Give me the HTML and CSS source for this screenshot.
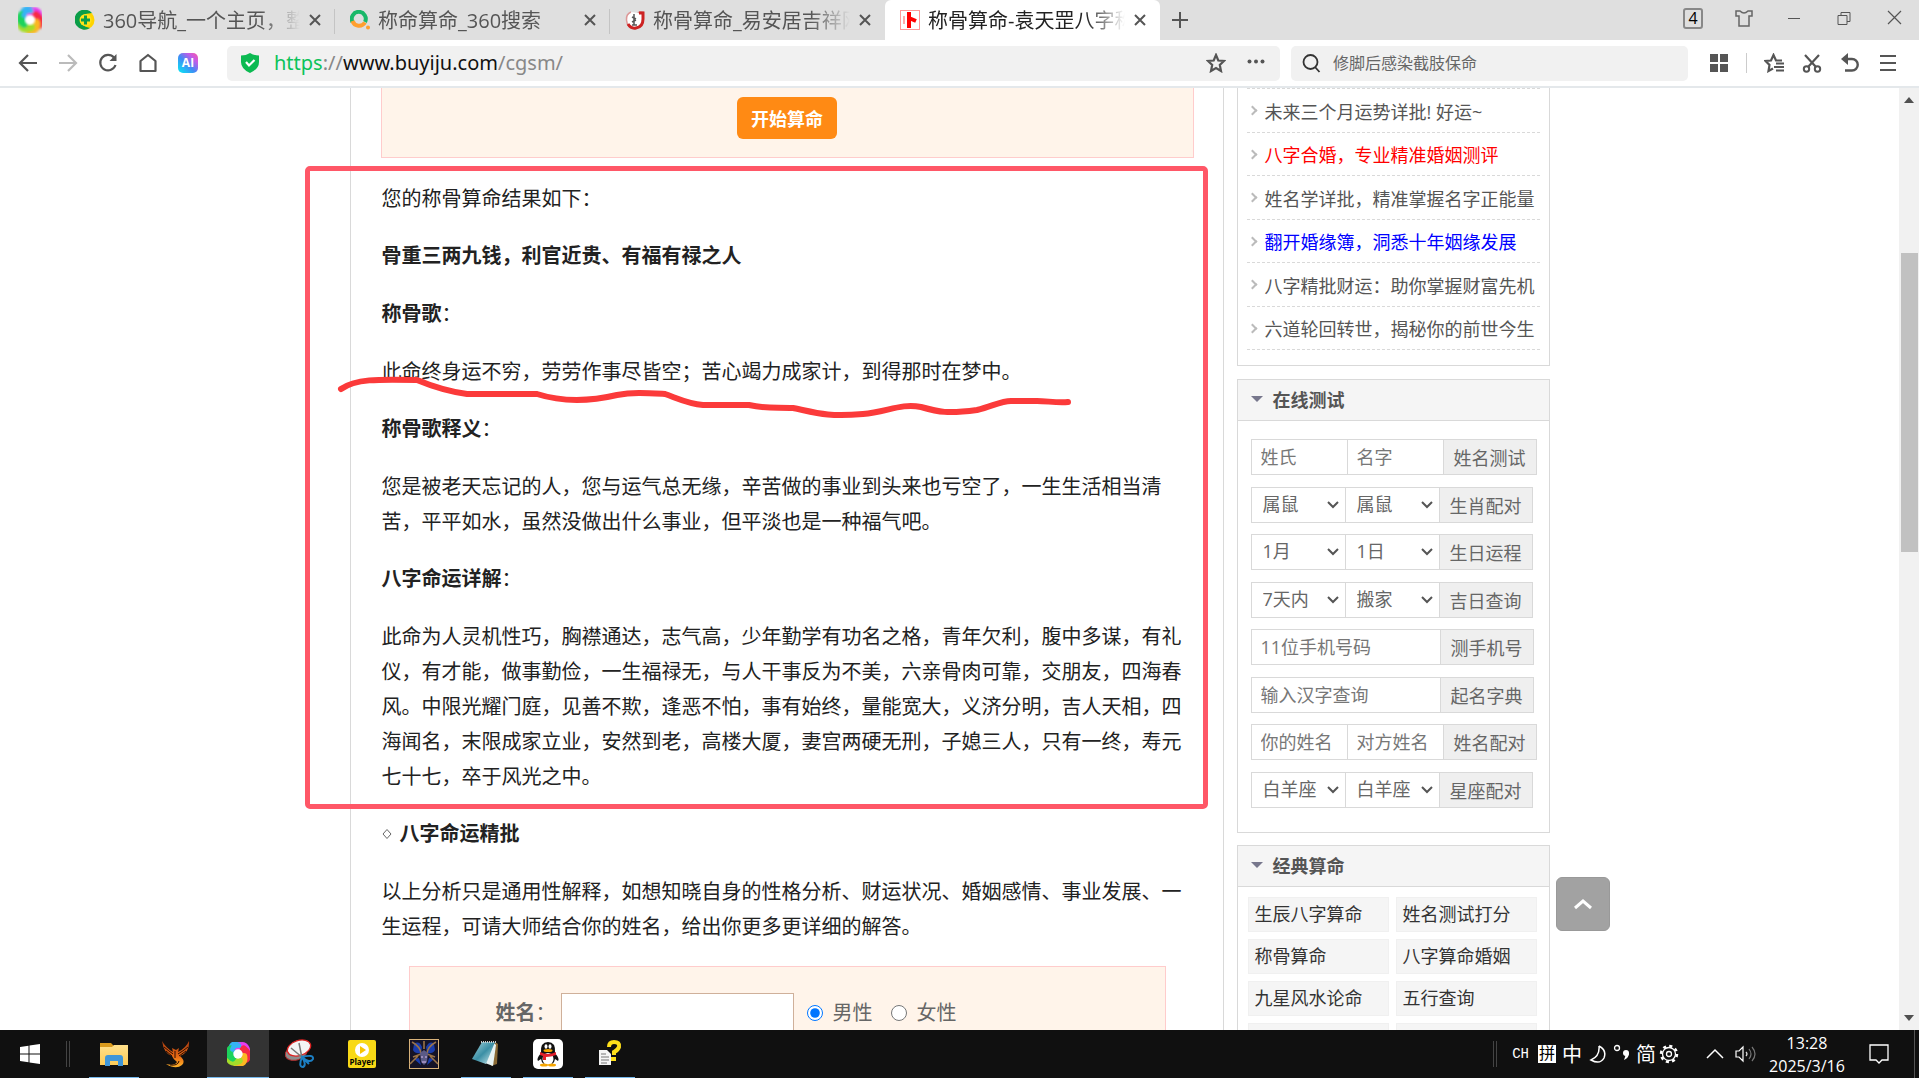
FILE: index.html
```html
<!DOCTYPE html>
<html lang="zh-CN">

<head>
  <meta charset="utf-8">
  <title>称骨算命-袁天罡八字称骨算命</title>
  <link rel="stylesheet" href="styles.css">
</head>

<body>
  <svg class="sprite" aria-hidden="true">
    <defs>
      <filter id="soft" x="-10%" y="-10%" width="120%" height="120%"><feGaussianBlur stdDeviation="0.8" /></filter>
      <symbol id="logo" viewBox="0 0 32 32">
        <g fill="none" stroke-width="8" stroke-linecap="round" filter="url(#soft)">
          <path d="M10 12 Q9 5 16 6" stroke="#35b4f5" />
          <path d="M15 9 Q23 4 25 12" stroke="#e63cf2" />
          <path d="M22 11 Q28 16 25 21" stroke="#f62a45" />
          <path d="M22 19 Q23 27 15 26" stroke="#fbb724" />
          <path d="M17 23 Q8 27 7 20" stroke="#a4dd2c" />
          <path d="M10 20 Q4 16 8 11" stroke="#1fd35c" />
          <path d="M10 11 Q12 6 17 7" stroke="#35b4f5" stroke-width="5" />
        </g>
        <circle cx="16" cy="16" r="5" fill="#fff" filter="url(#soft)" />
      </symbol>
      <symbol id="close" viewBox="0 0 12 12">
        <path d="M1 1 L11 11 M11 1 L1 11" fill="none" stroke="#555" stroke-width="2" />
      </symbol>
      <linearGradient id="ai-bg" x1="0" y1="1" x2="1" y2="0">
        <stop offset="0.1" stop-color="#12d8f4" />
        <stop offset="0.45" stop-color="#3f8cf5" />
        <stop offset="0.75" stop-color="#c55be8" />
        <stop offset="1" stop-color="#f95aa0" />
      </linearGradient>
      <linearGradient id="folder-bg" x1="0" y1="0" x2="0" y2="1">
        <stop offset="0" stop-color="#ffe08a" />
        <stop offset="1" stop-color="#fccb57" />
      </linearGradient>
      <linearGradient id="note-bg" x1="0" y1="0" x2="1" y2="1">
        <stop offset="0" stop-color="#a9d6de" />
        <stop offset="0.5" stop-color="#3b8fa5" />
        <stop offset="1" stop-color="#d7f0f2" />
      </linearGradient>
      <linearGradient id="fire" x1="0" y1="0" x2="0" y2="1">
        <stop offset="0" stop-color="#a93b10" />
        <stop offset="0.6" stop-color="#e86a13" />
        <stop offset="1" stop-color="#ffb52a" />
      </linearGradient>
    </defs>
  </svg>

  <header class="browser">
    <div class="tab-bar">
      <svg class="browser-logo" viewBox="0 0 32 32"><use href="#logo" /></svg>
      <div class="tabs">
        <div class="tab">
          <svg class="favicon" viewBox="0 0 20 20">
            <circle cx="10" cy="10" r="9.5" fill="#ffd400" />
            <path d="M17 3 A10 10 0 1 0 15 18 Q5 16 5 10 T17 3" fill="#0a9d48" />
            <circle cx="10.500" cy="10" r="6" fill="#ffe21a" />
            <path d="M10.500 5.500 V14.500 M6 10 H15" stroke="#0a9d48" stroke-width="3" />
          </svg>
          <span class="tab-title">360导航_一个主页，整</span>
          <button class="tab-close" aria-label="关闭"><svg viewBox="0 0 12 12"><use href="#close" /></svg></button>
        </div>
        <div class="tab">
          <svg class="favicon" viewBox="0 0 20 20">
            <path d="M2.500 12 A7 7 0 1 1 15 12" fill="none" stroke="#19b869" stroke-width="4" />
            <path d="M2.500 11 A7 7 0 0 0 15 12.500" fill="none" stroke="#ff9f2e" stroke-width="4" />
            <circle cx="18" cy="17.500" r="2" fill="#ff9f2e" />
          </svg>
          <span class="tab-title">称命算命_360搜索</span>
          <button class="tab-close" aria-label="关闭"><svg viewBox="0 0 12 12"><use href="#close" /></svg></button>
        </div>
        <div class="tab">
          <svg class="favicon" viewBox="0 0 20 20">
            <path d="M6 2 Q1 4 1.500 10 Q2 18 10 18 Q18 18 18 9 V2 Q14 1 13 3" fill="#fff" stroke="#d99" stroke-width="1.500" />
            <path d="M3 14 Q6 19 11 18 Q18 17 18 9 V3 H14" fill="none" stroke="#c22" stroke-width="3" />
            <path d="M9 4 V15 M7 7 L11 9 M7 12 L11 10 M7 15 H12" stroke="#555" stroke-width="1.500" />
          </svg>
          <span class="tab-title">称骨算命_易安居吉祥网</span>
          <button class="tab-close" aria-label="关闭"><svg viewBox="0 0 12 12"><use href="#close" /></svg></button>
        </div>
        <div class="tab active">
          <svg class="favicon" viewBox="0 0 20 20">
            <rect x="0.500" y="0.500" width="19" height="19" fill="#fff" stroke="#f99" />
            <path d="M9 2 V18 M9 8 L16 11" stroke="#f00" stroke-width="4" />
            <path d="M4 6 V14" stroke="#faa" stroke-width="2" />
          </svg>
          <span class="tab-title">称骨算命-袁天罡八字称</span>
          <button class="tab-close" aria-label="关闭"><svg viewBox="0 0 12 12"><use href="#close" /></svg></button>
        </div>
      </div>
      <button class="new-tab" aria-label="新标签页"><svg viewBox="0 0 16 16"><path d="M8 0 V16 M0 8 H16" stroke="#555" stroke-width="2" /></svg></button>
      <div class="window-buttons">
        <button class="tab-count">4</button>
        <button aria-label="皮肤"><svg viewBox="0 0 20 20"><path d="M2 3 H6 Q10 7 14 3 H18 V8 H15 V18 H5 V8 H2 Z" fill="none" stroke="#666" stroke-width="1.500" /></svg></button>
        <button aria-label="最小化"><svg viewBox="0 0 20 20"><path d="M4 10.500 H16" stroke="#555" /></svg></button>
        <button aria-label="还原"><svg viewBox="0 0 20 20"><path d="M4 7.500 H13 V16.500 H4 Z M7 7.500 V4.500 H16 V13.500 H13" fill="none" stroke="#555" /></svg></button>
        <button aria-label="关闭"><svg viewBox="0 0 20 20"><path d="M4 3 L17 16 M17 3 L4 16" stroke="#555" stroke-width="1.200" /></svg></button>
      </div>
    </div>

    <div class="toolbar">
      <div class="nav-buttons">
        <button aria-label="后退"><svg viewBox="0 0 20 20"><path d="M19 10 H2 M10 2 L2 10 L10 18" fill="none" stroke="#555" stroke-width="2.200" /></svg></button>
        <button aria-label="前进"><svg viewBox="0 0 20 20"><path d="M1 10 H18 M10 2 L18 10 L10 18" fill="none" stroke="#bbb" stroke-width="2.200" /></svg></button>
        <button aria-label="刷新"><svg viewBox="0 0 20 20"><path d="M16 4.500 A7.800 7.800 0 1 0 17.500 12" fill="none" stroke="#555" stroke-width="2.200" /><path d="M18.500 1 V8 H11.500 Z" fill="#555" /></svg></button>
        <button aria-label="主页"><svg viewBox="0 0 20 20"><path d="M2.500 8 L10 2 L17.500 8 V18 H2.500 Z" fill="none" stroke="#555" stroke-width="2.200" stroke-linejoin="round" /></svg></button>
        <button aria-label="AI"><svg viewBox="0 0 20 20"><rect width="20" height="20" rx="5" fill="url(#ai-bg)" /><text x="10" y="14" text-anchor="middle" class="ai-text">AI</text></svg></button>
      </div>
      <div class="address">
        <svg class="shield" viewBox="0 0 20 20"><path d="M10 0 Q14 2.500 19 2.500 V9 Q19 16 10 20 Q1 16 1 9 V2.500 Q6 2.500 10 0" fill="#0cba52" /><path d="M6 9 L9 12.500 L14.500 7" fill="none" stroke="#fff" stroke-width="2.200" /></svg>
        <span class="url"><span class="scheme">https</span>://<span class="host">www.buyiju.com</span>/cgsm/</span>
        <button aria-label="收藏"><svg viewBox="0 0 20 20"><path d="M10 2 L12.300 7.500 L18 8 L13.800 12 L15 18 L10 15 L5 18 L6.200 12 L2 8 L7.700 7.500 Z" fill="none" stroke="#555" stroke-width="2.200" /></svg></button>
        <button aria-label="更多"><svg viewBox="0 0 20 20"><g fill="#555"><circle cx="3.500" cy="8.500" r="2" /><circle cx="10" cy="8.500" r="2" /><circle cx="16.500" cy="8.500" r="2" /></g></svg></button>
      </div>
      <div class="search">
        <svg viewBox="0 0 20 20"><circle cx="9.500" cy="9" r="7" fill="none" stroke="#333" stroke-width="1.800" /><path d="M14 14 L18.500 19" stroke="#333" stroke-width="1.800" /></svg>
        <input type="text" aria-label="搜索" placeholder="修脚后感染截肢保命">
      </div>
      <div class="tools">
        <button aria-label="应用"><svg viewBox="0 0 20 20"><path d="M1 1 H9 V9 H1 Z M11 1 H19 V9 H11 Z M1 11 H9 V19 H1 Z M11 11 H19 V19 H11 Z" fill="#555" /></svg></button>
        <span class="divider"></span>
        <button aria-label="收藏夹"><svg viewBox="0 0 20 20"><path d="M18 7.500 H12 L9.500 2 L7 7.500 L1.500 8 L5.500 12 L4.500 18 L9 15.500" fill="none" stroke="#555" stroke-width="2.200" /><path d="M12 10.500 H20 M10 14 H20 M12 17.500 H20" stroke="#555" stroke-width="2" /></svg></button>
        <button aria-label="截图"><svg viewBox="0 0 20 20"><path d="M3 2 L14 14 M17 2 L6 14" fill="none" stroke="#555" stroke-width="2.200" /><circle cx="4.500" cy="16" r="2.700" fill="none" stroke="#555" stroke-width="2" /><circle cx="15.500" cy="16" r="2.700" fill="none" stroke="#555" stroke-width="2" /></svg></button>
        <button aria-label="恢复"><svg viewBox="0 0 20 20"><path d="M4 6 H12 A5.500 5.500 0 0 1 12 17.500 H5" fill="none" stroke="#555" stroke-width="2.400" /><path d="M8 0 V12 L1 6 Z" fill="#555" /></svg></button>
        <button aria-label="菜单"><svg viewBox="0 0 20 20"><path d="M2 3 H18 M2 10 H18 M2 17 H18" stroke="#555" stroke-width="2.200" /></svg></button>
      </div>
    </div>
  </header>

  <div class="viewport">
    <div class="page">
      <div class="container">
        <main class="article">
          <form class="start-form">
            <button type="button" class="start-btn">开始算命</button>
          </form>

          <div class="result">
            <p>您的称骨算命结果如下：</p>
            <p class="title"><strong>骨重三两九钱，利官近贵、有福有禄之人</strong></p>
            <p class="title"><strong>称骨歌</strong>：</p>
            <p>此命终身运不穷，劳劳作事尽皆空；苦心竭力成家计，到得那时在梦中。</p>
            <p class="title"><strong>称骨歌释义</strong>：</p>
            <p>您是被老天忘记的人，您与运气总无缘，辛苦做的事业到头来也亏空了，一生生活相当清苦，平平如水，虽然没做出什么事业，但平淡也是一种福气吧。</p>
            <p class="title"><strong>八字命运详解</strong>：</p>
            <p>此命为人灵机性巧，胸襟通达，志气高，少年勤学有功名之格，青年欠利，腹中多谋，有礼仪，有才能，做事勤俭，一生福禄无，与人干事反为不美，六亲骨肉可靠，交朋友，四海春风。中限光耀门庭，见善不欺，逢恶不怕，事有始终，量能宽大，义济分明，吉人天相，四海闻名，末限成家立业，安然到老，高楼大厦，妻宫两硬无刑，子媳三人，只有一终，寿元七十七，卒于风光之中。</p>
            <p class="title detail"><svg viewBox="0 0 10 12"><path d="M5 1.500 L9 6 L5 10.500 L1 6 Z" fill="none" stroke="#666" /></svg><strong>八字命运精批</strong></p>
            <p>以上分析只是通用性解释，如想知晓自身的性格分析、财运状况、婚姻感情、事业发展、一生运程，可请大师结合你的姓名，给出你更多更详细的解答。</p>
          </div>

          <form class="name-form">
            <label for="full-name"><strong>姓名</strong>：</label>
            <input type="text" id="full-name">
            <label class="sex"><input type="radio" name="sex" checked>男性</label>
            <label class="sex"><input type="radio" name="sex">女性</label>
          </form>
        </main>

        <aside class="sidebar">
          <section class="panel hot">
            <ul>
              <li><a href="#">未来三个月运势详批! 好运~</a></li>
              <li><a href="#" class="red">八字合婚，专业精准婚姻测评</a></li>
              <li><a href="#">姓名学详批，精准掌握名字正能量</a></li>
              <li><a href="#" class="blue">翻开婚缘簿，洞悉十年姻缘发展</a></li>
              <li><a href="#">八字精批财运：助你掌握财富先机</a></li>
              <li><a href="#">六道轮回转世，揭秘你的前世今生</a></li>
            </ul>
          </section>

          <section class="panel">
            <h2>在线测试</h2>
            <div class="tests">
              <form class="two-inputs"><input type="text" aria-label="姓氏" placeholder="姓氏"><input type="text" aria-label="名字" placeholder="名字"><button type="button">姓名测试</button></form>
              <form class="two-selects"><select aria-label="生肖"><option>属鼠</option></select><select aria-label="对方生肖"><option>属鼠</option></select><button type="button">生肖配对</button></form>
              <form class="two-selects"><select aria-label="月"><option>1月</option></select><select aria-label="日"><option>1日</option></select><button type="button">生日运程</button></form>
              <form class="two-selects"><select aria-label="时间"><option>7天内</option></select><select aria-label="事项"><option>搬家</option></select><button type="button">吉日查询</button></form>
              <form class="one-input"><input type="text" aria-label="手机号码" placeholder="11位手机号码"><button type="button">测手机号</button></form>
              <form class="one-input"><input type="text" aria-label="汉字" placeholder="输入汉字查询"><button type="button">起名字典</button></form>
              <form class="two-inputs"><input type="text" aria-label="你的姓名" placeholder="你的姓名"><input type="text" aria-label="对方姓名" placeholder="对方姓名"><button type="button">姓名配对</button></form>
              <form class="two-selects"><select aria-label="星座"><option>白羊座</option></select><select aria-label="对方星座"><option>白羊座</option></select><button type="button">星座配对</button></form>
            </div>
          </section>

          <section class="panel">
            <h2>经典算命</h2>
            <div class="classics">
              <a href="#">生辰八字算命</a>
              <a href="#">姓名测试打分</a>
              <a href="#">称骨算命</a>
              <a href="#">八字算命婚姻</a>
              <a href="#">九星风水论命</a>
              <a href="#">五行查询</a>
              <a href="#"></a>
              <a href="#"></a>
            </div>
          </section>
        </aside>

        <!-- marker drawn over the result -->
        <div class="mark-box"></div>
        <svg class="mark-line" viewBox="0 0 740 40">
          <path d="M4 14 C18 4 40 4 80 5 C92 10 108 16 130 19 H200 C222 26 250 27 280 20 C296 17 310 18 328 19 C342 24 352 29 366 30 H412 C430 34 440 32 456 33 C480 38 490 42 526 39 C550 37 564 28 584 32 C602 37 610 39 640 35 C656 31 664 26 674 26 H700 C710 26 720 28 731 27" />
        </svg>
        <button class="back-top" aria-label="返回顶部"><svg viewBox="0 0 20 12"><path d="M2 10 L10 3 L18 10" /></svg></button>
      </div>
    </div>
    <div class="scrollbar">
      <svg viewBox="0 0 10 6"><path d="M0 6 L5 0 L10 6 Z" /></svg>
      <div class="thumb"></div>
      <svg viewBox="0 0 10 6"><path d="M0 0 L5 6 L10 0 Z" /></svg>
    </div>
  </div>

  <footer class="taskbar">
    <button class="start" aria-label="开始"><svg viewBox="0 0 20 20"><path d="M0 3 L8.500 1.700 V9.500 H0 Z M9.500 1.500 L20 0 V9.500 H9.500 Z M0 10.500 H8.500 V18.300 L0 17 Z M9.500 10.500 H20 V20 L9.500 18.500 Z" fill="#fff" /></svg></button>
    <span class="grip"></span>
    <div class="apps">
      <button class="running" aria-label="文件资源管理器"><svg viewBox="0 0 30 30">
        <path d="M1 4 H12 L15 7 H28 V10 H1 Z" fill="#d99a1c" />
        <path d="M1 8 H13 L15 6 H29 V26 H1 Z" fill="url(#folder-bg)" />
        <path d="M6 27 V19 Q6 16 9 16 H21 Q24 16 24 19 V27 H19 V22 H11 V27 Z" fill="#3f96d8" />
      </svg></button>
      <button aria-label="凤凰"><svg viewBox="0 0 30 30">
        <path d="M1 2 Q5 9 12 13 L11 9 L15 11 L18 9 L17 13 Q25 9 28 2 Q29 13 19 17 Q25 22 21 26 Q15 31 5 25 Q14 27 16 23 Q12 20 11 17 Q3 15 1 2" fill="url(#fire)" />
        <path d="M3 8 Q8 12 12 15 M5 12 L11 17 M27 8 Q22 12 17 15 M25 12 L18 17 M9 26 Q17 27 18 22 M14 12 V19" fill="none" stroke="#2a0d04" />
      </svg></button>
      <button class="running active" aria-label="浏览器"><svg viewBox="0 0 32 32"><use href="#logo" /></svg></button>
      <button aria-label="截图工具"><svg viewBox="0 0 30 30">
        <ellipse cx="11" cy="14" rx="11" ry="7" transform="rotate(-15 11 14)" fill="#8d8d8d" stroke="#b33" />
        <ellipse cx="14" cy="9" rx="12" ry="7.500" transform="rotate(-18 14 9)" fill="#f4f4f4" stroke="#d22" stroke-width="1.300" />
        <path d="M14 4 L17 19 M6 9 L18 19" stroke="#777" stroke-width="1.500" />
        <path d="M17 18 Q29 15 28 20 Q25 25 17 18 Q13 28 18 28 Q22 26 17 18 L24 25" fill="none" stroke="#1c7fc4" stroke-width="2" />
      </svg></button>
      <button aria-label="Player"><svg viewBox="0 0 30 30">
        <rect x="1" y="1" width="28" height="28" rx="2" fill="#f8d916" />
        <circle cx="15" cy="11" r="7" fill="#fff" />
        <path d="M13 7 L19 11 L13 15 Z" fill="#f8c400" />
        <text x="15" y="26" text-anchor="middle" class="player-text">Player</text>
      </svg></button>
      <button aria-label="游戏"><svg viewBox="0 0 30 30">
        <rect width="30" height="30" fill="#d8b27a" />
        <rect x="1" y="1" width="28" height="28" fill="#151327" />
        <path d="M5 5 Q10 1 13 8 L12 14 Q6 15 4 11 M17 8 Q21 1 25 5 L26 11 Q24 15 18 14 M5 20 L10 19 L12 26 M25 20 L20 19 L18 26" fill="#1a3cab" />
        <path d="M3 3 Q12 8 12 15 L4 18 M27 3 Q18 8 18 15 L26 18 M1 25 L9 17 M29 25 L21 17 M15 2 V10" fill="none" stroke="#9a7348" stroke-width="1.600" />
        <path d="M11 14 L15 11 L19 14 L18 23 L15 26 L12 23 Z" fill="#5b5a86" />
        <path d="M12 18 H14 M16 18 H18 M13 23 H17" stroke="#dbe" />
      </svg></button>
      <button class="running" aria-label="记事本"><svg viewBox="0 0 30 30">
        <path d="M24 3 L27 5 L26 25 L20 27 Z" fill="#8a6a35" />
        <path d="M23 4 L25 6 L22 27 L14 24 Z" fill="#e8f3f3" />
        <path d="M11 3 L24 3 L15 25 L1 20 Z" fill="url(#note-bg)" />
        <path d="M10 3 H25" stroke="#ccc" stroke-width="2" stroke-dasharray="1 1" />
      </svg></button>
      <button class="running" aria-label="QQ"><svg viewBox="0 0 30 30">
        <rect width="30" height="30" rx="5" fill="#fff" />
        <path d="M8 14 Q7 3 15 3 Q23 3 22 14 Q27 20 25 22 L22 20 Q21 26 15 26 Q9 26 8 20 L5 22 Q3 20 8 14" fill="#111" />
        <ellipse cx="15" cy="20" rx="5.500" ry="6" fill="#fff" />
        <ellipse cx="13" cy="7.500" rx="1.500" ry="2.200" fill="#fff" /><ellipse cx="17" cy="7.500" rx="1.500" ry="2.200" fill="#fff" />
        <ellipse cx="15" cy="11.500" rx="4.500" ry="1.500" fill="#f7a600" />
        <path d="M7 13 Q15 17 23 13 V16 Q18 18 13 18 V21 H10 V17 L7 16 Z" fill="#e3202c" />
        <ellipse cx="11" cy="26" rx="4" ry="1.500" fill="#f7a600" /><ellipse cx="19" cy="26" rx="4" ry="1.500" fill="#f7a600" />
      </svg></button>
      <button class="running" aria-label="帮助"><svg viewBox="0 0 30 30">
        <path d="M14 8 Q14 3 19 3 Q25 3 24 8 Q23 11 19 13 V16" fill="none" stroke="#ffe01a" stroke-width="4" />
        <rect x="16" y="18" width="5" height="4" fill="#ffe01a" />
        <path d="M4 11 H12 L16 15 V26 H4 Z" fill="#f4f4f4" />
        <path d="M6 15 H11 M6 18 H14 M6 21 H14 M6 24 H12" stroke="#777" />
      </svg></button>
    </div>
    <div class="tray">
      <span class="grip"></span>
      <span class="lang">CH</span>
      <span class="pinyin">拼</span>
      <span class="ime">中</span>
      <svg viewBox="0 0 20 20"><path d="M11 2 Q12 12 3 16 Q12 21 16 14 Q19 6 11 2" fill="none" stroke="#fff" stroke-width="1.500" /></svg>
      <svg viewBox="0 0 20 20"><circle cx="5" cy="4" r="2.500" fill="none" stroke="#fff" stroke-width="1.300" /><circle cx="14" cy="9" r="3" fill="#fff" /><path d="M17 9 Q17 14 12 16 L14 10" fill="#fff" /></svg>
      <span class="ime simplified">简</span>
      <svg class="gear" viewBox="0 0 20 20"><circle cx="10" cy="10" r="8" fill="none" stroke="#fff" stroke-width="2.500" stroke-dasharray="3.100 3.180" /><circle cx="10" cy="10" r="6.500" fill="none" stroke="#fff" stroke-width="1.300" /><circle cx="10" cy="10" r="2.500" fill="none" stroke="#fff" stroke-width="1.300" /></svg>
      <svg class="caret" viewBox="0 0 20 20"><path d="M2 14 L10 6 L18 14" fill="none" stroke="#fff" stroke-width="1.500" /></svg>
      <svg class="volume" viewBox="0 0 22 20"><path d="M1 7 H4 L8 3 V17 L4 13 H1 Z" fill="none" stroke="#fff" stroke-width="1.200" /><path d="M11 8 Q13 10 11 12" fill="none" stroke="#ddd" stroke-width="1.200" /><path d="M14 5 Q18 10 14 15 M17 3 Q23 10 17 17" fill="none" stroke="#777" stroke-width="1.200" /></svg>
      <div class="clock">
        <div>13:28</div>
        <div>2025/3/16</div>
      </div>
      <svg class="message" viewBox="0 0 20 20"><path d="M1 1 H19 V16 H13 L10 19 L7 16 H1 Z" fill="none" stroke="#fff" stroke-width="1.300" /></svg>
    </div>
  </footer>
</body>

</html>
```
FILE: styles.css
```css
* {
  box-sizing: border-box;
}

body {
  margin: 0;
  height: 100vh;
  display: flex;
  flex-direction: column;
  overflow: hidden;
  background-color: #fff;
  color: #222;
  font-family: "Open Sans", "Noto Sans CJK SC", sans-serif;
}

button {
  border: none;
  padding: 0;
  background: none;
  font-family: inherit;
  cursor: pointer;
}

input,
select {
  font-family: inherit;
}

svg {
  display: block;
  flex-shrink: 0;
}

.sprite {
  position: absolute;
  width: 0;
  height: 0;
}

/* browser frame */

.browser {
  flex-shrink: 0;
  border-bottom: 2px solid #e4e8eb;
}

.tab-bar {
  display: flex;
  height: 40px;
  background-color: #dfdfdf;
}

.browser-logo {
  width: 32px;
  height: 32px;
  margin: 4px 14px;
}

.tabs {
  display: flex;
}

.tab {
  display: flex;
  align-items: center;
  width: 275px;
  padding: 0 14px 0 15px;
  position: relative;
  color: #555;
}

.tab::after {
  content: "";
  position: absolute;
  right: 0;
  top: 9px;
  width: 1px;
  height: 25px;
  background-color: #c4c4c4;
}

.tab:nth-child(3)::after,
.tab.active::after {
  display: none;
}

.tab.active {
  background-color: #fff;
  border-radius: 6px 6px 0 0;
  color: #222;
}

.favicon {
  width: 20px;
  height: 20px;
  margin-right: 8px;
}

.tab-title {
  flex: 1;
  padding-top: 2px;
  overflow: hidden;
  white-space: nowrap;
  font-size: 20px;
  line-height: 38px;
  -webkit-mask-image: linear-gradient(to right, #000 80%, transparent);
  mask-image: linear-gradient(to right, #000 80%, transparent);
}

.tab-close {
  width: 12px;
  height: 12px;
  margin-left: 9px;
}

.new-tab {
  width: 40px;
}

.new-tab svg {
  width: 16px;
  height: 16px;
  margin: 0 auto;
}

.window-buttons {
  display: flex;
  align-items: center;
  margin-left: auto;
  height: 36px;
}

.window-buttons button {
  width: 50px;
}

.window-buttons svg {
  width: 20px;
  height: 20px;
  margin: 0 auto;
}

.window-buttons .tab-count {
  width: 20px;
  height: 21px;
  margin-right: 16px;
  border: 2px solid #888;
  border-radius: 3px;
  color: #000;
  font-size: 16px;
  line-height: 16px;
}

.toolbar {
  display: flex;
  align-items: center;
  height: 46px;
  padding: 0 12px 0 8px;
}

.toolbar svg {
  width: 20px;
  height: 20px;
  margin: 0 auto;
}

.nav-buttons {
  display: flex;
  width: 219px;
}

.nav-buttons button {
  width: 40px;
}

.ai-text {
  fill: #fff;
  font-size: 12px;
  font-weight: bold;
}

.address,
.search {
  display: flex;
  align-items: center;
  height: 35px;
  border-radius: 5px;
  background-color: #f1f1f1;
}

.address {
  flex: 1;
  padding: 0 4px 0 13px;
}

.address .shield {
  margin: 0 14px 0 0;
}

.address button {
  width: 40px;
}

.url {
  flex: 1;
  color: #888;
  font-family: "Noto Sans", sans-serif;
  font-size: 20px;
  line-height: 34px;
}

.scheme {
  color: #0cc35a;
}

.host {
  color: #111;
}

.search {
  width: 397px;
  margin-left: 11px;
  padding-left: 10px;
}

.search svg {
  margin: 0;
}

.search input {
  flex: 1;
  min-width: 0;
  margin-left: 12px;
  padding: 0;
  border: none;
  background: none;
  font-size: 16px;
}

.search input::placeholder {
  color: #666;
}

.tools {
  display: flex;
  align-items: center;
  margin-left: 12px;
}

.tools button {
  width: 38px;
}

.divider {
  width: 1px;
  height: 20px;
  margin: 0 8px;
  background-color: #ccc;
}

/* page */

.viewport {
  flex: 1;
  min-height: 0;
  display: flex;
}

.page {
  flex: 1;
  overflow: hidden;
}

.container {
  position: relative;
  display: grid;
  grid-template-columns: 1fr 313px;
  gap: 13px;
  width: 1200px;
  margin: 0 auto;
}

.article {
  padding: 0 29px 0 30px;
  border: 1px solid #d9d9d9;
  border-width: 0 1px;
}

.start-form {
  height: 70px;
  margin-bottom: 23px;
  padding-top: 9px;
  border: 1px solid #fcc;
  border-top: none;
  background-color: #fff4ea;
  text-align: center;
}

.start-btn {
  width: 100px;
  height: 42px;
  border-radius: 6px;
  background-color: #ff8a14;
  color: #fff;
  font-size: 18px;
  font-weight: bold;
}

.result {
  padding-left: 1px;
}

.result p {
  margin: 0 0 22px;
  font-size: 20px;
  line-height: 35px;
}

.result .title {
  margin-bottom: 23px;
}

.detail {
  display: flex;
  align-items: center;
}

.detail svg {
  width: 10px;
  height: 12px;
  margin-right: 8px;
}

.name-form {
  display: flex;
  align-items: center;
  margin: 0 28px;
  padding: 26px 0 26px 86px;
  border: 1px solid #fcc;
  background-color: #fff4ea;
  color: #666;
  font-size: 20px;
}

.name-form label {
  padding-bottom: 4px;
}

.name-form input[type="text"] {
  width: 233px;
  height: 40px;
  margin: 0 10px 0 5px;
  border: 1px solid #cfb09a;
  background-color: #fff;
}

.sex {
  display: flex;
  align-items: center;
  margin-right: 15px;
}

.sex input {
  width: 16px;
  height: 16px;
  margin: 4px 10px 0 3px;
}

/* sidebar */

.panel {
  margin-bottom: 12px;
  border: 1px solid #d9d9d9;
}

.panel h2 {
  display: flex;
  align-items: center;
  height: 41px;
  margin: 0;
  padding: 0 0 3px 13px;
  border-bottom: 1px solid #d9d9d9;
  background-color: #f5f5f5;
  color: #555;
  font-size: 18px;
}

.panel h2::before {
  content: "";
  margin-right: 10px;
  border: 6px solid transparent;
  border-top-color: #77778c;
  border-bottom: none;
}

.hot {
  margin-bottom: 13px;
  padding: 0 9px 15px;
  border-top: none;
}

.hot ul {
  margin: 0;
  padding: 0;
  list-style: none;
  border-top: 1px dashed #d9d9d9;
}

.hot li {
  display: flex;
  align-items: center;
  height: 44px;
  padding-left: 2px;
  border-bottom: 1px dashed #d9d9d9;
}

.hot li:nth-child(even) {
  height: 43px;
}

.hot li::before {
  content: "";
  width: 5px;
  height: 5px;
  margin-right: 9px;
  border: 2px solid #bbb;
  border-width: 2px 2px 0 0;
  transform: rotate(45deg);
}

.hot a {
  padding-top: 2px;
  color: #555;
  font-size: 18px;
  line-height: 30px;
  text-decoration: none;
  white-space: nowrap;
}

.hot .red {
  color: #f00;
}

.hot .blue {
  color: #00f;
}

.tests {
  padding: 18px 13px 12px;
}

.tests form {
  display: flex;
  margin-bottom: 12px;
}

.tests form:nth-child(even) {
  margin-bottom: 11px;
}

.tests form:last-child {
  margin-bottom: 12px;
}

.tests input,
.tests select,
.tests button {
  height: 36px;
  margin: 0 -1px 0 0;
  border: 1px solid #d9d9d9;
  border-radius: 0;
  background-color: #fff;
  color: #666;
  font-size: 18px;
}

.tests input {
  width: 97px;
  padding: 0 9px;
}

.tests input::placeholder {
  color: #777;
}

.tests select {
  width: 95px;
  padding: 0 0 2px 11px;
  appearance: none;
  background: #fff url("data:image/svg+xml,%3Csvg xmlns='http://www.w3.org/2000/svg' viewBox='0 0 12 8'%3E%3Cpath d='M1 1 L6 6 L11 1' fill='none' stroke='%23555' stroke-width='2'/%3E%3C/svg%3E") no-repeat right 6px center / 12px 8px;
}

.tests button {
  width: 94px;
  background-color: #efefef;
}

.tests .one-input input {
  width: 190px;
}

.classics {
  display: grid;
  grid-template-columns: 1fr 1fr;
  gap: 7px;
  padding: 10px 12px 10px 10px;
}

.classics a {
  height: 35px;
  padding-left: 6px;
  border: 1px solid #f0f0f0;
  background-color: #f5f5f5;
  color: #333;
  font-size: 18px;
  line-height: 32px;
  text-decoration: none;
}

.mark-box {
  position: absolute;
  left: -45px;
  top: 78px;
  width: 903px;
  height: 643px;
  border: 5px solid #ff5767;
  border-radius: 5px;
}

.mark-line {
  position: absolute;
  left: -13px;
  top: 287px;
  width: 740px;
  height: 40px;
  overflow: visible;
}

.mark-line path {
  fill: none;
  stroke: #fb3a3a;
  stroke-width: 6px;
  stroke-linecap: round;
}

.back-top {
  position: absolute;
  left: 1206px;
  top: 789px;
  width: 54px;
  height: 54px;
  border: 1px solid #999;
  border-radius: 6px;
  background-color: #a2a2a2;
}

.back-top svg {
  width: 20px;
  height: 12px;
  margin: 0 auto;
}

.back-top path {
  fill: none;
  stroke: #fff;
  stroke-width: 3px;
}

.scrollbar {
  display: flex;
  flex-direction: column;
  align-items: center;
  width: 20px;
  padding: 9px 0;
  background-color: #f1f1f1;
}

.scrollbar svg {
  width: 10px;
  height: 6px;
  fill: #505050;
}

.scrollbar .thumb {
  width: 17px;
  height: 299px;
  margin: 150px 0 auto;
  background-color: #c1c1c1;
}

/* taskbar */

.taskbar {
  flex-shrink: 0;
  display: flex;
  align-items: center;
  height: 48px;
  background-color: #101010;
  color: #fff;
}

.start {
  width: 20px;
  margin: 0 26px 0 20px;
}

.grip {
  width: 4px;
  height: 26px;
  border: 1px solid #444;
  border-width: 0 1px;
}

.apps {
  display: flex;
  align-self: stretch;
  margin-left: 13px;
}

.apps button {
  position: relative;
  width: 62px;
}

.apps svg {
  width: 30px;
  height: 30px;
  margin: 0 auto;
}

.apps .running::after {
  content: "";
  position: absolute;
  left: 6px;
  right: 6px;
  bottom: 0;
  height: 1px;
  background-color: #76b9ed;
}

.apps .active {
  background-color: #333;
}

.apps .active::after {
  left: 0;
  right: 0;
}

.player-text {
  font-size: 8px;
  font-weight: bold;
}

.tray {
  display: flex;
  align-items: center;
  align-self: stretch;
  margin-left: auto;
  margin-right: 4px;
  padding-right: 25px;
  border-right: 1px solid #555;
}

.tray svg {
  width: 20px;
  height: 20px;
}

.lang {
  margin: 0 9px 0 15px;
  font-family: "Liberation Mono", monospace;
  font-size: 14px;
}

.pinyin {
  width: 18px;
  height: 18px;
  margin-right: 6px;
  background-color: #fff;
  color: #000;
  font-size: 16px;
  line-height: 16px;
  text-align: center;
}

.ime {
  margin-right: 6px;
  padding-bottom: 2px;
  font-size: 20px;
}

.ime.simplified {
  margin-right: 3px;
}

.tray .ime + svg + svg {
  margin: 0 4px;
}

.tray .simplified + .gear + .caret {
  margin: 0 10px 0 26px;
}

.tray .volume {
  width: 22px;
}

.clock {
  width: 76px;
  margin: 0 24px 0 12px;
  padding-top: 2px;
  font-size: 16px;
  line-height: 23px;
  text-align: center;
}
```
